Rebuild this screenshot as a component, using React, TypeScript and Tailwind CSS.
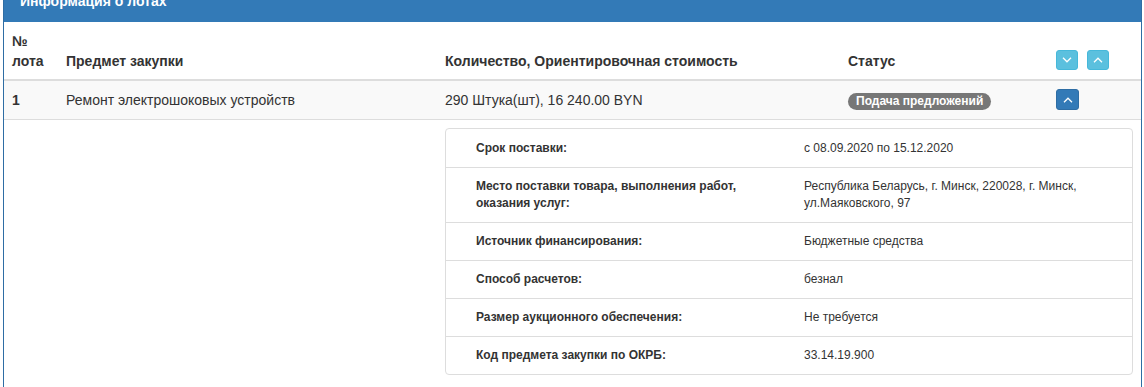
import React from "react";

const font = { fontFamily: '"Liberation Sans", Arial, sans-serif' };

function Chevron({ dir }: { dir: "up" | "down" }) {
  return (
    <svg width="10" height="6" viewBox="0 0 10 6" fill="none">
      {dir === "up" ? (
        <polyline points="1,5.2 5,1.2 9,5.2" stroke="white" strokeWidth="1.3" />
      ) : (
        <polyline points="1,0.8 5,4.8 9,0.8" stroke="white" strokeWidth="1.3" />
      )}
    </svg>
  );
}

const details: [string, string][] = [
  ["Срок поставки:", "с 08.09.2020 по 15.12.2020"],
  [
    "Место поставки товара, выполнения работ, оказания услуг:",
    "Республика Беларусь, г. Минск, 220028, г. Минск, ул.Маяковского, 97",
  ],
  ["Источник финансирования:", "Бюджетные средства"],
  ["Способ расчетов:", "безнал"],
  ["Размер аукционного обеспечения:", "Не требуется"],
  ["Код предмета закупки по ОКРБ:", "33.14.19.900"],
];

export default function App() {
  return (
    <div className="w-[1144px] h-[387px] bg-white overflow-hidden text-[#333]" style={font}>
      <div className="ml-[3px] w-[1139px] h-[400px] border-x border-[#2e6da4]">
        <div className="h-[22px] bg-[#337ab7] overflow-hidden">
          <div className="-mt-[7px] pl-[16px] text-[14px] leading-[16px] font-bold text-white">
            Информация о лотах
          </div>
        </div>
        <table className="w-full table-fixed border-collapse text-[14px] leading-[20px]">
          <colgroup>
            <col className="w-[54px]" />
            <col className="w-[379px]" />
            <col className="w-[403px]" />
            <col className="w-[208px]" />
            <col />
          </colgroup>
          <thead>
            <tr className="border-b-2 border-[#ddd]">
              <th className="text-left align-bottom px-2 pt-[9px] pb-[8px] font-bold">№ лота</th>
              <th className="text-left align-bottom px-2 pt-[9px] pb-[8px] font-bold">Предмет закупки</th>
              <th className="text-left align-bottom px-2 pt-[9px] pb-[8px] font-bold">
                Количество, Ориентировочная стоимость
              </th>
              <th className="text-left align-bottom px-2 pt-[9px] pb-[8px] font-bold">Статус</th>
              <th className="text-left align-bottom px-2 pt-[9px] pb-[9px]">
                <div className="flex gap-[9px]">
                  <span className="w-[22px] h-[20px] rounded-[3px] bg-[#5bc0de] border border-[#46b8da] flex items-center justify-center">
                    <Chevron dir="down" />
                  </span>
                  <span className="w-[22px] h-[20px] rounded-[3px] bg-[#5bc0de] border border-[#46b8da] flex items-center justify-center">
                    <Chevron dir="up" />
                  </span>
                </div>
              </th>
            </tr>
          </thead>
          <tbody>
            <tr className="bg-[#f9f9f9] border-b border-[#ddd]">
              <td className="px-2 pt-[9px] pb-[9px] font-bold">1</td>
              <td className="px-2 pt-[9px] pb-[9px]">Ремонт электрошоковых устройств</td>
              <td className="px-2 pt-[9px] pb-[9px]">290 Штука(шт), 16 240.00 BYN</td>
              <td className="px-2 pt-[9px] pb-[9px]">
                <span className="inline-block rounded-[10px] bg-[#777] text-white font-bold text-[12px] leading-[16px] px-[8px] pb-[1px]">
                  Подача предложений
                </span>
              </td>
              <td className="px-2 pt-[8px] pb-[9px]">
                <span className="w-[23px] h-[21px] rounded-[3px] bg-[#337ab7] border border-[#2e6da4] flex items-center justify-center">
                  <Chevron dir="up" />
                </span>
              </td>
            </tr>
            <tr>
              <td></td>
              <td></td>
              <td colSpan={3} className="px-2 pt-[8px] pb-[8px]">
                <div className="border border-[#ddd] rounded-[4px] text-[12px] leading-[17px]">
                  {details.map(([k, v], i) => (
                    <div
                      key={i}
                      className={`grid grid-cols-[358px_1fr] ${i > 0 ? "border-t border-[#ddd]" : ""}`}
                    >
                      <div className={`pl-[30px] pr-[40px] ${i > 0 ? "pt-[10px]" : "pt-[11px]"} pb-[10px] font-bold`}>{k}</div>
                      <div className={`pr-[30px] ${i > 0 ? "pt-[10px]" : "pt-[11px]"} pb-[10px]`}>{v}</div>
                    </div>
                  ))}
                </div>
              </td>
            </tr>
          </tbody>
        </table>
      </div>
    </div>
  );
}
